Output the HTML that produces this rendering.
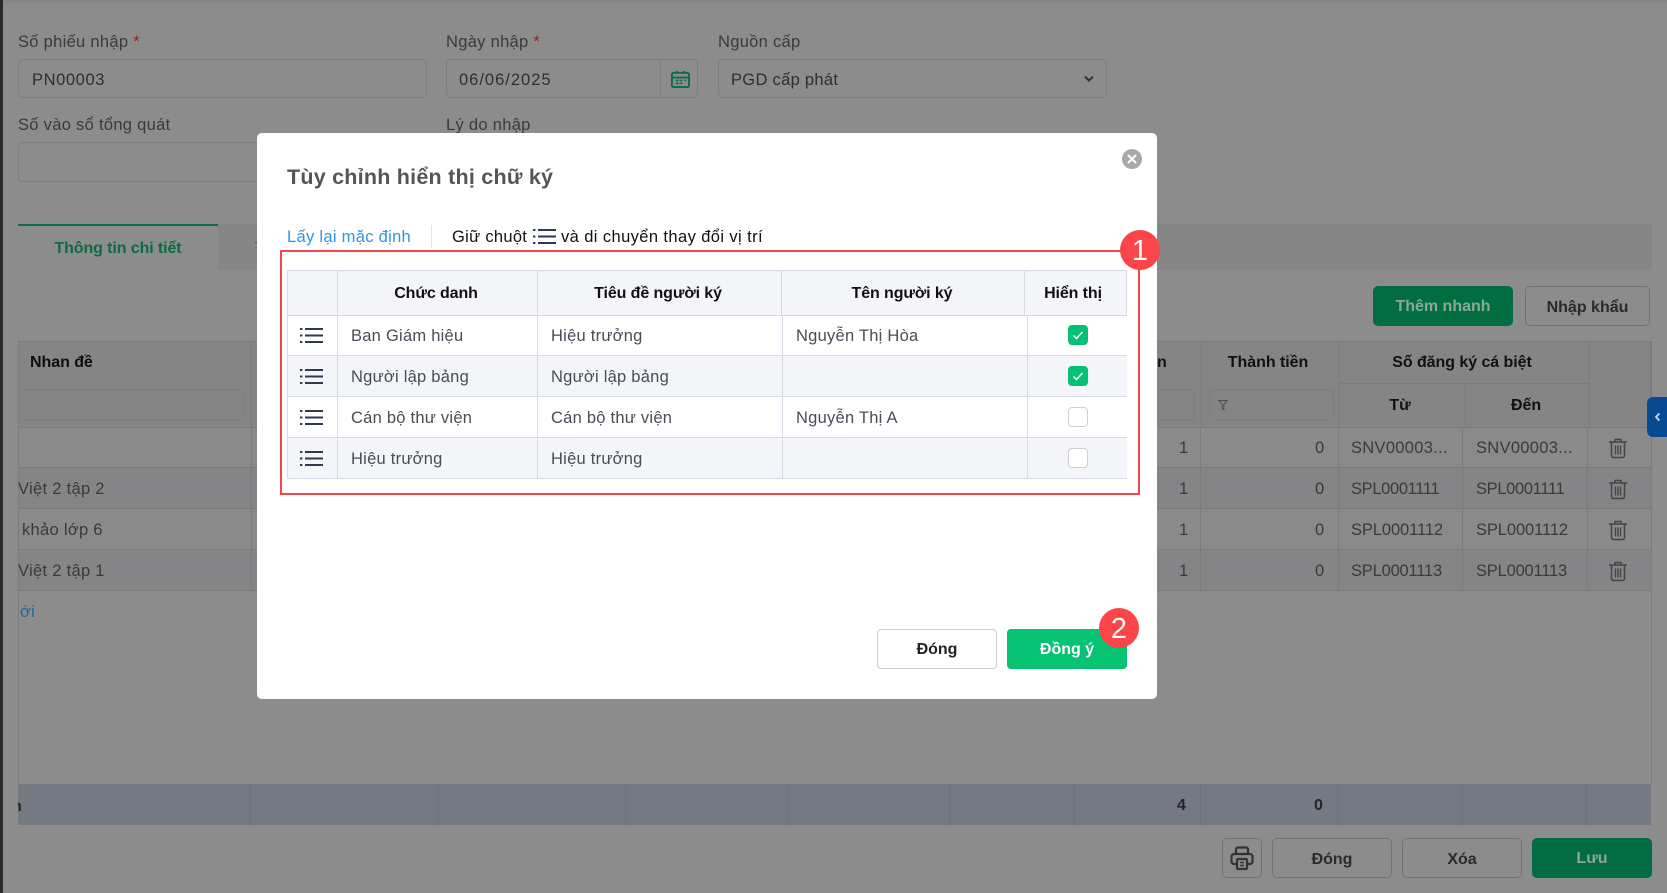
<!DOCTYPE html>
<html lang="vi"><head><meta charset="utf-8"><title>Tùy chỉnh hiển thị chữ ký</title>
<style>
html,body{margin:0;padding:0}
body{width:1667px;height:893px;overflow:hidden;position:relative;background:#8c8c8c;font-family:"Liberation Sans",sans-serif;font-size:16.5px;color:#2f2f2f}
div,span,svg{position:absolute;box-sizing:border-box}
.t{white-space:nowrap;line-height:20px;height:20px;letter-spacing:.3px;margin-top:1px}
.c{transform:translateX(-50%)}
.b{font-weight:700;font-size:16px;letter-spacing:-.05px}
.lb{color:#3a3a3a}
.in{border:1px solid #7d7d7d;border-radius:5px}
.h{background:#7b7b7b}
.v{background:#7b7b7b}
.btn{border:1px solid #727272;border-radius:5px;text-align:center;line-height:41px;font-weight:700;color:#2a2a2a;font-size:16px;letter-spacing:0}
.m{color:#4b4b57;letter-spacing:.25px}
.mh{color:#111;font-weight:700;font-size:16px;letter-spacing:-.1px}
.tl{background:#d8dbe6}
</style></head><body>
<div style="left:0;top:0;width:3px;height:893px;background:#2b2b2b"></div>
<div style="left:3px;top:0;width:1664px;height:3px;background:#858585"></div>

<span class="t lb" style="left:18px;top:31px">Số phiếu nhập <span style="position:static;color:#a02020">*</span></span>
<span class="t lb" style="left:446px;top:31px">Ngày nhập <span style="position:static;color:#a02020">*</span></span>
<span class="t lb" style="left:718px;top:31px">Nguồn cấp</span>
<div class="in" style="left:18px;top:59px;width:409px;height:39px"></div>
<div class="in" style="left:446px;top:59px;width:252px;height:39px"></div>
<div style="left:660px;top:60px;width:1px;height:37px;background:#7d7d7d"></div>
<div class="in" style="left:718px;top:59px;width:389px;height:39px"></div>
<span class="t" style="left:32px;top:69px;letter-spacing:.6px">PN00003</span>
<span class="t" style="left:459px;top:69px;letter-spacing:1px">06/06/2025</span>
<span class="t" style="left:731px;top:69px">PGD cấp phát</span>
<svg style="left:670px;top:70px" width="21" height="19" viewBox="0 0 22 20" fill="none" stroke="#0f6b45" stroke-width="2"><rect x="2" y="3" width="18" height="15" rx="2"/><path d="M2 8h18M7 1v3M15 1v3"/><path d="M6 11h3M10 11h3M15 11h2M6 14h3M10 14h3" stroke-width="1.8"/></svg>
<svg style="left:1083px;top:75px" width="12" height="8" viewBox="0 0 14 10" fill="none" stroke="#2f2f3a" stroke-width="2.4"><path d="M2 2l5 5 5-5"/></svg>

<span class="t lb" style="left:18px;top:114px">Số vào sổ tổng quát</span>
<span class="t lb" style="left:446px;top:114px">Lý do nhập</span>
<div class="in" style="left:18px;top:142px;width:300px;height:40px"></div>

<div style="left:18px;top:224px;width:1634px;height:46px;background:#868686"></div>
<div style="left:18px;top:224px;width:200px;height:46px;background:#8c8c8c;border-top:2px solid #0b6e45"></div>
<span class="t b c" style="left:118px;top:238px;color:#0c6b45;letter-spacing:-.1px">Thông tin chi tiết</span>
<div style="left:255px;top:242px;width:3px;height:1px;background:#555"></div>

<div style="left:1373px;top:286px;width:140px;height:40px;background:#026c43;border-radius:5px;text-align:center;line-height:41px;font-weight:700;font-size:16px;color:#8aa898">Thêm nhanh</div>
<div class="btn" style="left:1525px;top:286px;width:125px;height:40px">Nhập khẩu</div>

<!-- background table -->
<div style="left:18px;top:341px;width:1633px;height:87px;background:#858585;border:1px solid #7b7b7b"></div>
<div style="left:18px;top:428px;width:1633px;height:39px;background:#8a8a8a"></div>
<div style="left:18px;top:468px;width:1633px;height:40px;background:#858587"></div>
<div style="left:18px;top:509px;width:1633px;height:40px;background:#8a8a8a"></div>
<div style="left:18px;top:550px;width:1633px;height:40px;background:#858587"></div>
<div class="h" style="left:18px;top:427px;width:1633px;height:1px"></div>
<div class="h" style="left:18px;top:467px;width:1633px;height:1px"></div>
<div class="h" style="left:18px;top:508px;width:1633px;height:1px"></div>
<div class="h" style="left:18px;top:549px;width:1633px;height:1px"></div>
<div class="h" style="left:18px;top:590px;width:1633px;height:1px"></div>
<div class="v" style="left:18px;top:341px;width:1px;height:443px"></div>
<div class="v" style="left:1651px;top:341px;width:1px;height:443px"></div>
<div class="v" style="left:251px;top:341px;width:1px;height:250px"></div>
<div class="v" style="left:1201px;top:341px;width:1px;height:86px"></div>
<div class="v" style="left:1339px;top:341px;width:1px;height:86px"></div>
<div class="v" style="left:1465px;top:383px;width:1px;height:44px"></div>
<div class="v" style="left:1589px;top:341px;width:1px;height:86px"></div>
<div class="h" style="left:1339px;top:383px;width:250px;height:1px"></div>
<div class="v" style="left:1200px;top:428px;width:1px;height:162px"></div>
<div class="v" style="left:1338px;top:428px;width:1px;height:162px"></div>
<div class="v" style="left:1462px;top:428px;width:1px;height:162px"></div>
<div class="v" style="left:1587px;top:428px;width:1px;height:162px"></div>

<span class="t b" style="left:30px;top:352px;color:#0d0d10">Nhan đề</span>
<div class="in" style="left:18px;top:389px;width:227px;height:32px;border-left:0"></div>
<div class="in" style="left:1100px;top:389px;width:95px;height:32px"></div>
<div class="in" style="left:1209px;top:389px;width:125px;height:32px"></div>
<svg style="left:1218px;top:399px" width="10" height="12" viewBox="0 0 12 13" fill="none" stroke="#444" stroke-width="1"><path d="M1 1h10L7 6v6L5 10V6z"/></svg>
<span class="t b" style="left:1157px;top:352px;color:#111">n</span>
<span class="t b c" style="left:1268px;top:352px;color:#111">Thành tiền</span>
<span class="t b c" style="left:1462px;top:352px;color:#111">Số đăng ký cá biệt</span>
<span class="t b c" style="left:1400px;top:395px;color:#111">Từ</span>
<span class="t b c" style="left:1526px;top:395px;color:#111">Đến</span>

<span class="t lb" style="left:18px;top:478px">Việt 2 tập 2</span>
<span class="t lb" style="left:22px;top:519px">khảo lớp 6</span>
<span class="t lb" style="left:18px;top:560px">Việt 2 tập 1</span>
<span class="t" style="left:20px;top:601px;color:#1f6a9a">ới</span>

<span class="t lb" style="left:1179px;top:437px">1</span><span class="t lb" style="left:1315px;top:437px">0</span><span class="t lb" style="left:1351px;top:437px">SNV00003...</span><span class="t lb" style="left:1476px;top:437px">SNV00003...</span>
<span class="t lb" style="left:1179px;top:478px">1</span><span class="t lb" style="left:1315px;top:478px">0</span><span class="t lb" style="left:1351px;top:478px;letter-spacing:-.34px">SPL0001111</span><span class="t lb" style="left:1476px;top:478px;letter-spacing:-.34px">SPL0001111</span>
<span class="t lb" style="left:1179px;top:519px">1</span><span class="t lb" style="left:1315px;top:519px">0</span><span class="t lb" style="left:1351px;top:519px;letter-spacing:-.1px">SPL0001112</span><span class="t lb" style="left:1476px;top:519px;letter-spacing:-.1px">SPL0001112</span>
<span class="t lb" style="left:1179px;top:560px">1</span><span class="t lb" style="left:1315px;top:560px">0</span><span class="t lb" style="left:1351px;top:560px;letter-spacing:-.2px">SPL0001113</span><span class="t lb" style="left:1476px;top:560px;letter-spacing:-.2px">SPL0001113</span>

<svg width="0" height="0"><defs>
<g id="tr" fill="none" stroke="#444" stroke-width="1.5"><path d="M1 5h18M7 5V2.5h6V5"/><path d="M3.5 5.500v13a2 2 0 0 0 2 2h9a2 2 0 0 0 2-2v-13"/><path d="M7.500 8.500v9M10 8.500v9M12.500 8.500v9" stroke-width="1.300"/></g>
<g id="li" fill="none" stroke="#2d3a50" stroke-width="2"><path d="M5 2h18M5 8.500h18M5 15h18"/><path d="M0 2h2.400M0 8.500h2.400M0 15h2.400"/></g>
<g id="ck"><rect width="20" height="20" rx="4" fill="#06c173"/><path d="M5.500 10.500l3 3 6-6.500" fill="none" stroke="#fff" stroke-width="1.500"/></g>
</defs></svg>
<svg style="left:1608px;top:437px" width="20" height="22" viewBox="0 0 20 22"><use href="#tr"/></svg>
<svg style="left:1608px;top:478px" width="20" height="22" viewBox="0 0 20 22"><use href="#tr"/></svg>
<svg style="left:1608px;top:519px" width="20" height="22" viewBox="0 0 20 22"><use href="#tr"/></svg>
<svg style="left:1608px;top:560px" width="20" height="22" viewBox="0 0 20 22"><use href="#tr"/></svg>

<div style="left:1647px;top:397px;width:20px;height:40px;background:#074a94;border-radius:6px 0 0 6px"></div>
<svg style="left:1654px;top:412px" width="7" height="10" viewBox="0 0 9 14" fill="none" stroke="#cfd8e6" stroke-width="2.600"><path d="M7 2L2.500 7 7 12"/></svg>

<!-- totals -->
<div style="left:18px;top:784px;width:1633px;height:41px;background:#757a82"></div>
<div style="left:250px;top:784px;width:1px;height:41px;background:#6e737b"></div>
<div style="left:438px;top:784px;width:1px;height:41px;background:#6e737b"></div>
<div style="left:625px;top:784px;width:1px;height:41px;background:#6e737b"></div>
<div style="left:787px;top:784px;width:1px;height:41px;background:#6e737b"></div>
<div style="left:949px;top:784px;width:1px;height:41px;background:#6e737b"></div>
<div style="left:1074px;top:784px;width:1px;height:41px;background:#6e737b"></div>
<div style="left:1200px;top:784px;width:1px;height:41px;background:#6e737b"></div>
<div style="left:1337px;top:784px;width:1px;height:41px;background:#6e737b"></div>
<div style="left:1462px;top:784px;width:1px;height:41px;background:#6e737b"></div>
<div style="left:1586px;top:784px;width:1px;height:41px;background:#6e737b"></div>
<div style="left:18px;top:796px;width:4px;height:20px;overflow:hidden"><span class="t b" style="left:-6px;top:0;color:#22242a">n</span></div>
<span class="t b" style="left:1177px;top:795px;color:#22242a">4</span>
<span class="t b" style="left:1314px;top:795px;color:#22242a">0</span>

<!-- footer -->
<div class="in" style="left:1222px;top:838px;width:40px;height:40px;border-color:#727272"></div>
<svg style="left:1230px;top:846px" width="24" height="25" viewBox="0 0 24 25" fill="none" stroke="#333" stroke-width="2.200"><path d="M6 8V3.500a2 2 0 0 1 2-2h8a2 2 0 0 1 2 2V8"/><path d="M6 18H4a2.500 2.500 0 0 1-2.500-2.500v-5A2.500 2.500 0 0 1 4 8h16a2.500 2.500 0 0 1 2.500 2.500v5A2.500 2.500 0 0 1 20 18h-2"/><rect x="7" y="13" width="10" height="10" rx="1"/><path d="M10 16.500h4M10 19.500h4" stroke-width="1.500"/></svg>
<div class="btn" style="left:1272px;top:838px;width:120px;height:40px;line-height:42px">Đóng</div>
<div class="btn" style="left:1402px;top:838px;width:120px;height:40px;line-height:42px">Xóa</div>
<div style="left:1532px;top:838px;width:120px;height:40px;background:#026c43;border-radius:5px;text-align:center;line-height:42px;font-weight:700;font-size:16px;color:#8aa898">Lưu</div>

<!-- modal -->
<div style="left:257px;top:133px;width:900px;height:566px;background:#fff;border-radius:5px"></div>
<span class="t" style="left:287px;top:166px;font-size:21.5px;font-weight:700;color:#555;letter-spacing:.23px">Tùy chỉnh hiển thị chữ ký</span>
<svg style="left:1121px;top:148px" width="22" height="22" viewBox="0 0 22 22"><circle cx="11" cy="11" r="10" fill="#a8a8a8"/><path d="M7 7l8 8M15 7l-8 8" stroke="#fff" stroke-width="2"/></svg>
<span class="t" style="left:287px;top:226px;color:#2b95e9">Lấy lại mặc định</span>
<div style="left:431px;top:225px;width:1px;height:23px;background:#e3e3e3"></div>
<span class="t" style="left:452px;top:226px;color:#111">Giữ chuột</span>
<svg style="left:533px;top:228px" width="23" height="17" viewBox="0 0 23 17"><use href="#li"/></svg>
<span class="t" style="left:561px;top:226px;color:#111;letter-spacing:.4px">và di chuyển thay đổi vị trí</span>

<div style="left:287px;top:270px;width:840px;height:45px;background:#f3f5f9"></div>
<div style="left:287px;top:356px;width:840px;height:41px;background:#f3f5f9"></div>
<div style="left:287px;top:438px;width:840px;height:41px;background:#f3f5f9"></div>
<div class="tl" style="left:287px;top:270px;width:840px;height:1px"></div>
<div class="tl" style="left:287px;top:315px;width:840px;height:1px"></div>
<div class="tl" style="left:287px;top:355px;width:840px;height:1px"></div>
<div class="tl" style="left:287px;top:396px;width:840px;height:1px"></div>
<div class="tl" style="left:287px;top:437px;width:840px;height:1px"></div>
<div class="tl" style="left:287px;top:478px;width:840px;height:1px"></div>
<div class="tl" style="left:287px;top:270px;width:1px;height:209px"></div>
<div class="tl" style="left:337px;top:270px;width:1px;height:209px"></div>
<div class="tl" style="left:537px;top:270px;width:1px;height:209px"></div>
<div class="tl" style="left:781px;top:270px;width:1px;height:45px"></div>
<div class="tl" style="left:782px;top:315px;width:1px;height:164px"></div>
<div class="tl" style="left:1024px;top:270px;width:1px;height:45px"></div>
<div class="tl" style="left:1027px;top:315px;width:1px;height:164px"></div>
<div class="tl" style="left:1126px;top:270px;width:1px;height:45px"></div>

<span class="t c mh" style="left:436px;top:283px">Chức danh</span>
<span class="t c mh" style="left:658px;top:283px">Tiêu đề người ký</span>
<span class="t c mh" style="left:902px;top:283px">Tên người ký</span>
<span class="t c mh" style="left:1073px;top:283px">Hiển thị</span>

<svg style="left:300px;top:327px" width="23" height="17" viewBox="0 0 23 17"><use href="#li"/></svg>
<svg style="left:300px;top:368px" width="23" height="17" viewBox="0 0 23 17"><use href="#li"/></svg>
<svg style="left:300px;top:409px" width="23" height="17" viewBox="0 0 23 17"><use href="#li"/></svg>
<svg style="left:300px;top:450px" width="23" height="17" viewBox="0 0 23 17"><use href="#li"/></svg>

<span class="t m" style="left:351px;top:325px">Ban Giám hiệu</span><span class="t m" style="left:551px;top:325px">Hiệu trưởng</span><span class="t m" style="left:796px;top:325px">Nguyễn Thị Hòa</span>
<span class="t m" style="left:351px;top:366px">Người lập bảng</span><span class="t m" style="left:551px;top:366px">Người lập bảng</span>
<span class="t m" style="left:351px;top:407px">Cán bộ thư viện</span><span class="t m" style="left:551px;top:407px">Cán bộ thư viện</span><span class="t m" style="left:796px;top:407px">Nguyễn Thị A</span>
<span class="t m" style="left:351px;top:448px">Hiệu trưởng</span><span class="t m" style="left:551px;top:448px">Hiệu trưởng</span>

<svg style="left:1068px;top:325px" width="20" height="20"><use href="#ck"/></svg>
<svg style="left:1068px;top:366px" width="20" height="20"><use href="#ck"/></svg>
<div style="left:1068px;top:407px;width:20px;height:20px;background:#fff;border:1px solid #cfcfcf;border-radius:4px"></div>
<div style="left:1068px;top:448px;width:20px;height:20px;background:#fff;border:1px solid #cfcfcf;border-radius:4px"></div>

<div style="left:280px;top:250px;width:860px;height:245px;border:2px solid #f44548"></div>
<div style="left:1120px;top:230px;width:40px;height:40px;border-radius:50%;background:#fc4548;color:#fff;text-align:center;line-height:42px;font-size:29px">1</div>

<div style="left:877px;top:629px;width:120px;height:40px;background:#fff;border:1px solid #cfcfcf;border-radius:4px;text-align:center;line-height:40px;font-weight:700;font-size:16px;color:#222">Đóng</div>
<div style="left:1007px;top:629px;width:120px;height:40px;background:#05c373;border-radius:4px;text-align:center;line-height:42px;font-weight:700;font-size:16px;color:#fff">Đồng ý</div>
<div style="left:1099px;top:608px;width:40px;height:40px;border-radius:50%;background:#fc4548;color:#fff;text-align:center;line-height:42px;font-size:29px">2</div>
</body></html>
